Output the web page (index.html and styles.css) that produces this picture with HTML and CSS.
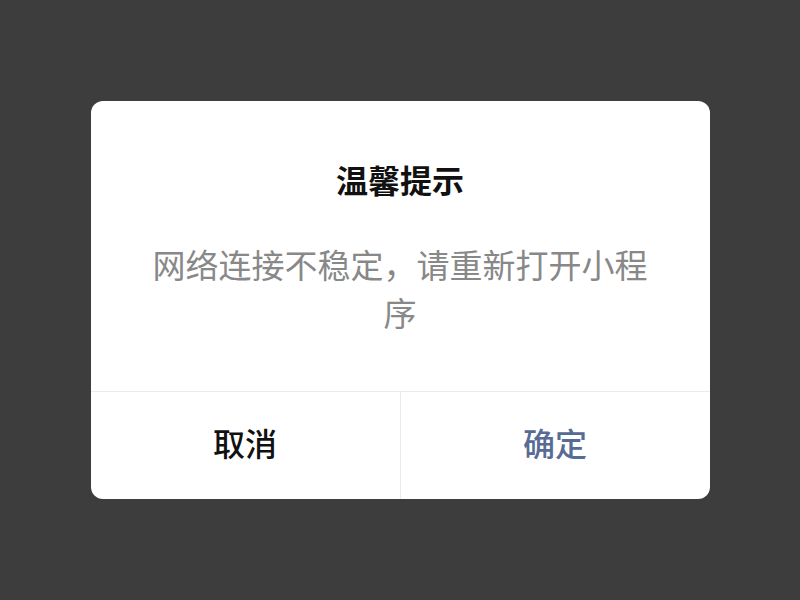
FILE: index.html
```html
<!DOCTYPE html>
<html lang="zh-CN">
<head>
    <meta charset="UTF-8">
    <meta name="viewport" content="width=device-width, initial-scale=1.0">
    <title>温馨提示</title>
    <link rel="stylesheet" href="styles.css">
</head>
<body>

<div class="modal">
    <div class="modal-body">
        <h2 class="modal-title">温馨提示</h2>
        <p class="modal-text">网络连接不稳定，请重新打开小程序</p>
    </div>
    <div class="modal-footer">
        <button class="btn btn-cancel">取消</button>
        <button class="btn btn-confirm">确定</button>
    </div>
</div>

</body>
</html>
```

FILE: styles.css
```css
body {
    font-family: "Noto Sans CJK SC", "Noto Sans", sans-serif;
    margin: 0;
    padding: 0;
    height: 100vh;
    display: flex;
    justify-content: center;
    align-items: center;
    background-color: #3d3d3d;
}

.modal {
    width: 619px;
    background-color: #fff;
    border-radius: 12px;
    overflow: hidden;
}

.modal-body {
    padding: 56px 54px 55px;
    text-align: center;
}

.modal-title {
    margin: 0;
    font-size: 32px;
    line-height: 44px;
    font-weight: 700;
    color: #111;
}

.modal-text {
    margin: 39px 0 0;
    font-size: 33px;
    line-height: 48px;
    color: #888;
}

.modal-footer {
    display: flex;
    border-top: 1px solid #ebebeb;
}

.btn {
    flex: 1;
    height: 107px;
    padding: 0 0 8px;
    border: none;
    background: none;
    font-family: inherit;
    font-size: 32px;
    font-weight: 500;
    cursor: pointer;
}

.btn-cancel {
    color: #111;
    border-right: 1px solid #ebebeb;
}

.btn-confirm {
    color: #576b95;
}
```
